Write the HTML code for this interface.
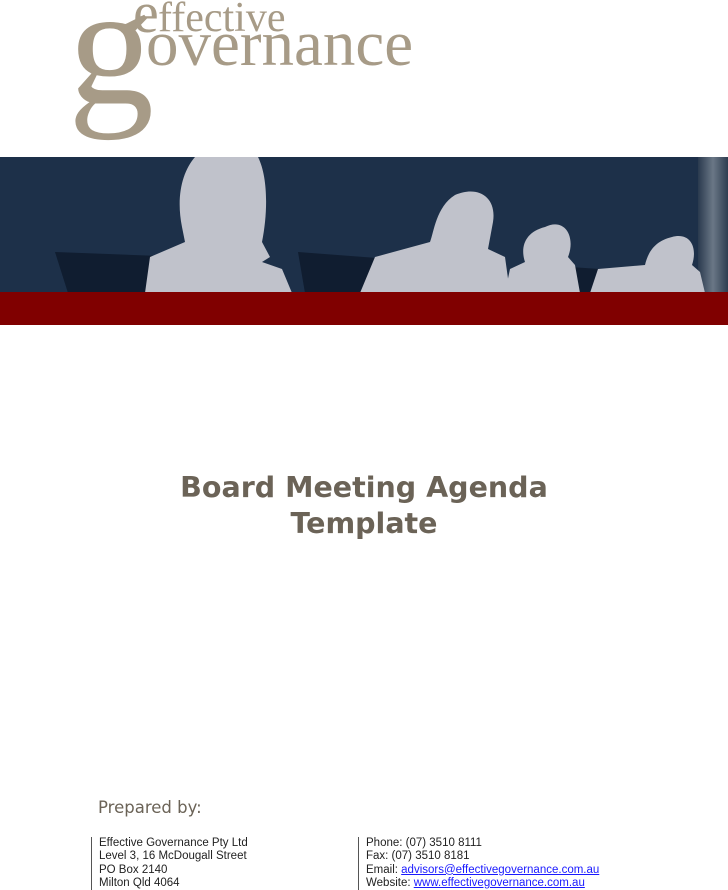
<!DOCTYPE html>
<html><head><meta charset="utf-8"><style>
body{margin:0;width:728px;height:890px;background:#fff;position:relative;overflow:hidden;font-family:"Liberation Sans",sans-serif}
.logo{position:absolute;font-family:"Liberation Serif",serif;color:#a79b87;white-space:nowrap}
.t{position:absolute;left:0;width:728px;text-align:center;font-family:"DejaVu Sans",sans-serif;font-weight:bold;font-size:28.5px;color:#6b6357}
.col{position:absolute;top:837px;border-left:1px solid #555;padding-left:7px;font-size:11.5px;line-height:13.3px;color:#222;height:53px}
a{color:#1a1aff;text-decoration:underline}
</style></head><body>
<div class="logo" style="left:68px;top:-40px;font-size:172px;line-height:1">g</div>
<div class="logo" style="left:158px;top:-3px;font-size:42px;line-height:1">ffective</div>
<div class="logo" style="left:133px;top:-16px;font-size:58px;line-height:1">e</div>
<div class="logo" style="left:146px;top:12px;font-size:65px;line-height:1">overnance</div>

<svg style="position:absolute;left:0;top:157px" width="728" height="168" viewBox="0 0 728 168">
<defs><linearGradient id="m" x1="0" x2="1"><stop offset="0" stop-color="#2a3a4e"/><stop offset=".5" stop-color="#6a7786"/><stop offset="1" stop-color="#2e3d50"/></linearGradient></defs>
<rect width="728" height="136" fill="#1d3049"/>
<rect x="698" width="30" height="136" fill="url(#m)"/>
<g fill="#101d30">
<path d="M55 95 L185 100 L190 136 L68 136 Z"/>
<path d="M298 95 L390 102 L395 136 L305 136 Z"/>
<path d="M403 100 L480 108 L485 136 L410 136 Z"/>
<path d="M570 110 L600 112 L600 136 L575 136 Z"/>
<path d="M600 118 L700 125 L705 136 L600 136 Z"/>
</g>
<g fill="#c0c2cb">
<path d="M195 0 L258 0 C268 20 268 55 262 85 L270 100 L262 105 L282 112 L292 136 L145 136 L150 100 L185 85 L182 70 C176 40 182 15 195 0 Z"/>
<path d="M455 38 C478 28 497 40 493 65 L488 92 L505 100 L510 136 L360 136 L375 100 L430 85 C434 75 436 50 455 38 Z"/>
<path d="M545 70 C565 60 576 80 568 100 L575 108 L580 136 L505 136 L510 112 L525 105 C520 90 525 75 545 70 Z"/>
<path d="M672 80 C690 75 698 90 692 108 L700 115 L705 136 L590 136 L598 112 L645 108 C648 95 655 84 672 80 Z"/>
</g>
<rect y="135" width="728" height="33" fill="#800000"/>
</svg>

<div class="t" style="top:470px;line-height:36px">Board Meeting Agenda<br>Template</div>
<div style="position:absolute;left:98px;top:798px;font-family:'DejaVu Sans',sans-serif;font-size:16.5px;color:#6b6357">Prepared by:</div>
<div class="col" style="left:91px">Effective Governance Pty Ltd<br>Level 3, 16 McDougall Street<br>PO Box 2140<br>Milton Qld 4064</div>
<div class="col" style="left:358px">Phone: (07) 3510 8111<br>Fax: (07) 3510 8181<br>Email: <a>advisors@effectivegovernance.com.au</a><br>Website: <a>www.effectivegovernance.com.au</a></div>
</body></html>
